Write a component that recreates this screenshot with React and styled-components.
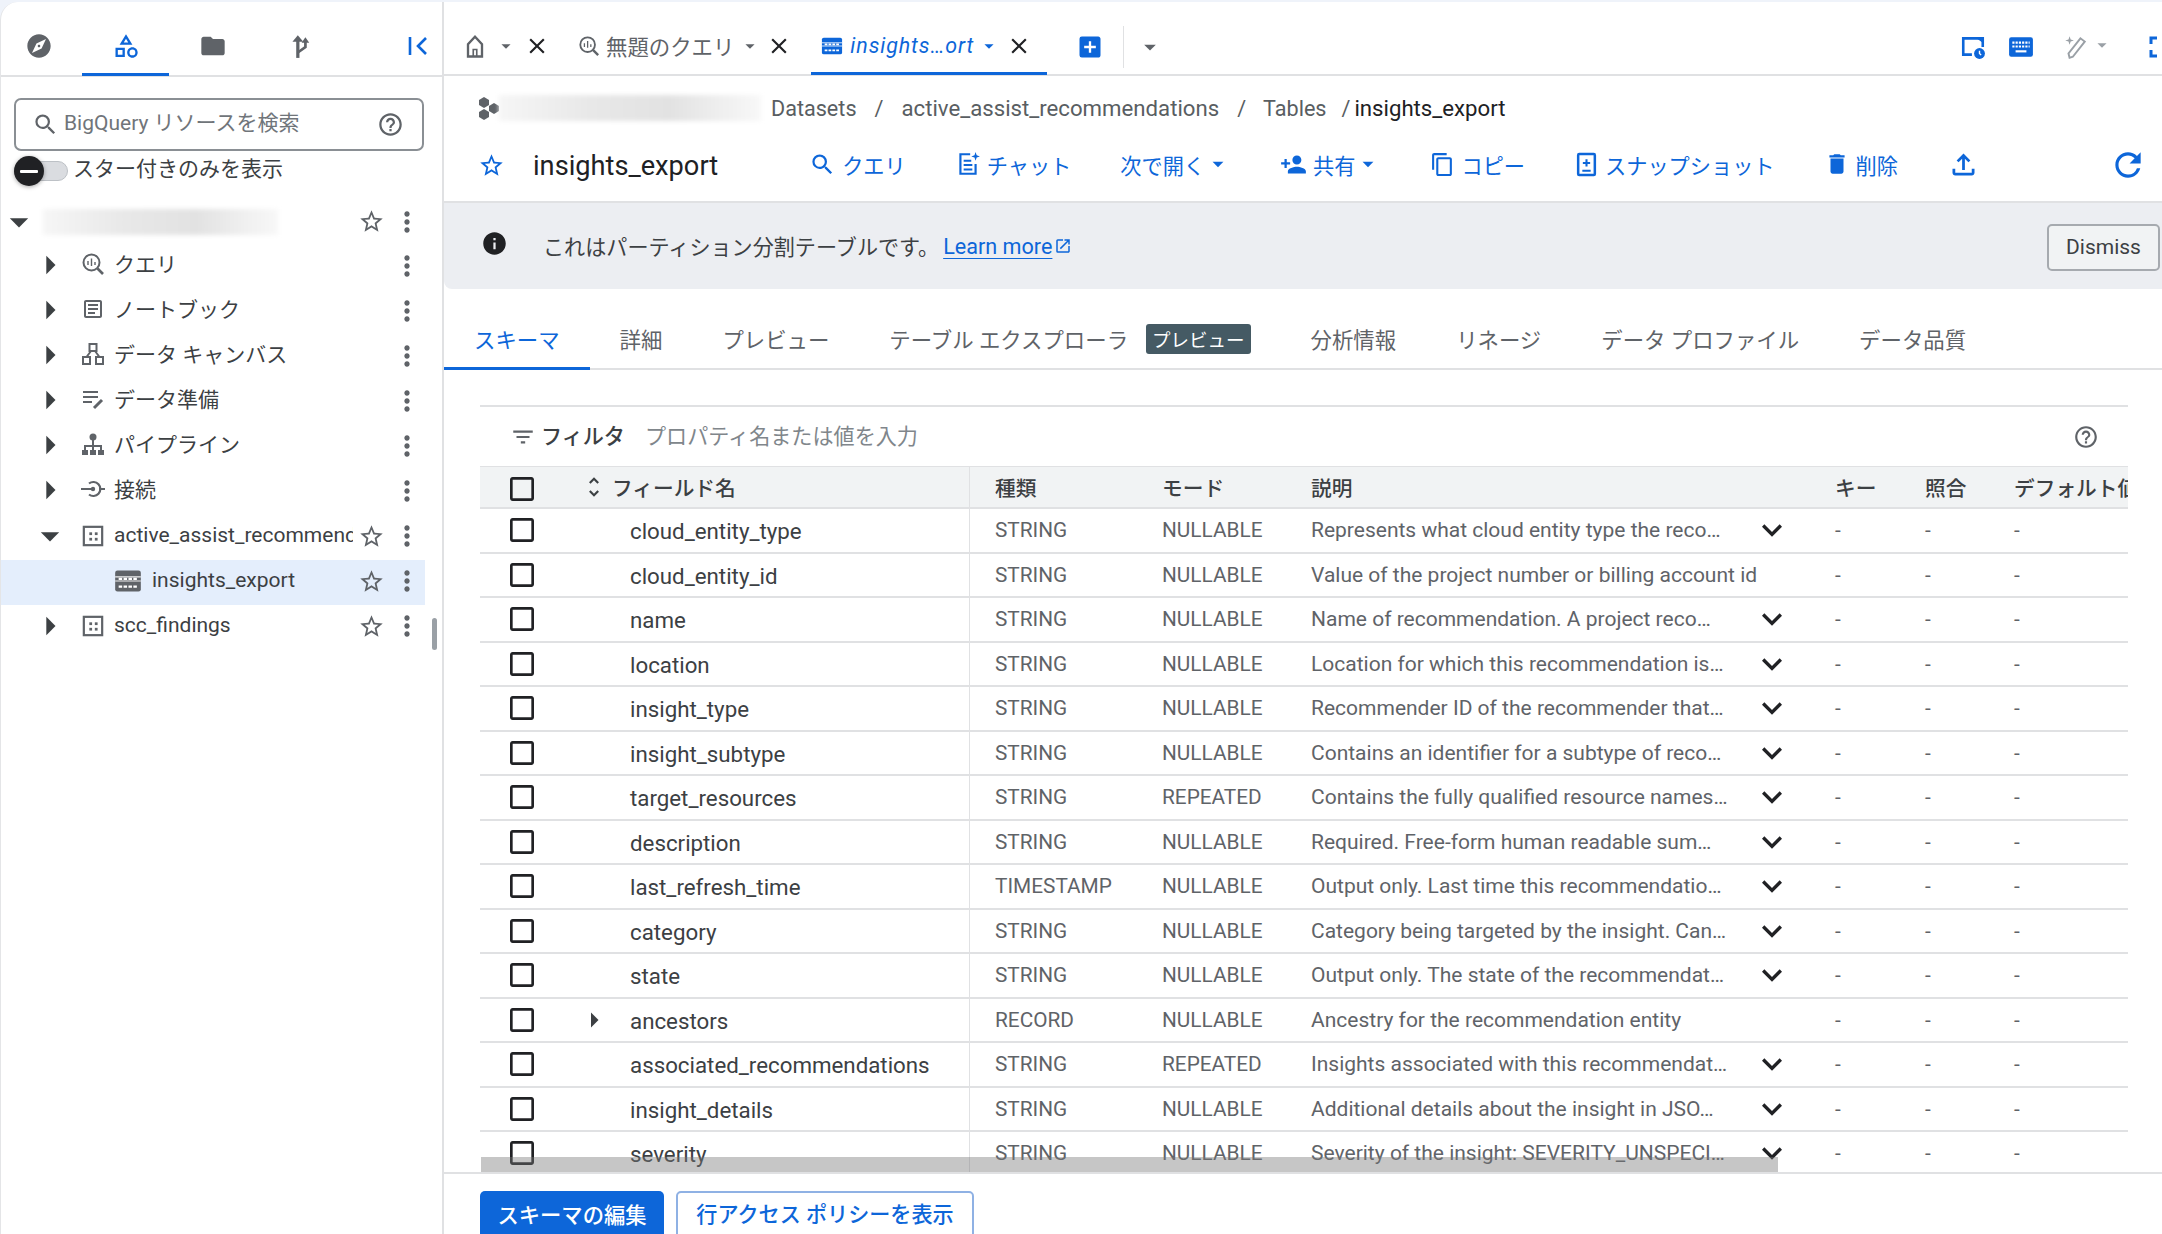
import React from "react";
import styled, { createGlobalStyle } from "styled-components";
import {
  MdExplore,
  MdOutlineCategory,
  MdFolder,
  MdSearch,
  MdHelpOutline,
  MdStarBorder,
  MdMoreVert,
  MdArrowDropDown,
  MdArrowRight,
  MdOutlineArticle,
  MdClose,
  MdAddBox,
  MdFullscreen,
  MdPersonAdd,
  MdContentCopy,
  MdDelete,
  MdOutlineFileUpload,
  MdRefresh,
  MdInfo,
  MdOpenInNew,
  MdFilterList,
  MdUnfoldMore,
  MdExpandMore,
  MdCheckBoxOutlineBlank,
} from "react-icons/md";

const BLUE = "#0d66d9";
const GREY = "#5f6368";
const DARK = "#202124";
const LINE = "#e0e1e3";
const FONT = `Roboto, "Noto Sans CJK JP", sans-serif`;

const GlobalStyle = createGlobalStyle`
  html, body { margin: 0; padding: 0; height: 100%; overflow: hidden; }
  body { font-family: ${FONT}; color: ${DARK}; background: #eff3fa; }
  #root { height: 100%; }
`;

/* ---- drawn icons ---- */
const Svg = ({ size = 24, color = "currentColor", children }) => (
  <svg width={size} height={size} viewBox="0 0 24 24" fill="none" stroke={color} strokeWidth="2" style={{ flexShrink: 0 }}>
    {children}
  </svg>
);

const ForkIcon = (p) => (
  <Svg {...p}>
    <path d="M10 23V5" strokeWidth="3" />
    <path d="M5 8l5-6 5 6z" fill="currentColor" stroke="none" />
    <path d="M10 18l7-5V8" strokeWidth="2.5" />
    <path d="M13.5 9l3.5-5 3.5 5z" fill="currentColor" stroke="none" />
  </Svg>
);
const CollapseIcon = (p) => (
  <Svg {...p}>
    <path d="M4 3v18" strokeWidth="2.6" />
    <path d="M20 4l-8 8 8 8" strokeWidth="2.6" />
  </Svg>
);
const QueryIcon = (p) => (
  <Svg {...p}>
    <circle cx="10.5" cy="10.5" r="8" />
    <path d="M16.5 16.5L22 22" strokeWidth="2.6" />
    <path d="M7 9v4M10.5 6.5V14M14 10v3" strokeWidth="1.4" />
  </Svg>
);
const CanvasIcon = (p) => (
  <Svg {...p}>
    <rect x="8.5" y="2" width="7" height="7" />
    <rect x="2" y="15" width="7" height="7" />
    <rect x="15" y="15" width="7" height="7" />
    <path d="M10 9l-4.5 6M14 9l4.5 6" />
  </Svg>
);
const PrepIcon = (p) => (
  <Svg {...p}>
    <path d="M2 5h15M2 10h15M2 15h9" />
    <path d="M13 21l8-8" strokeWidth="3" />
  </Svg>
);
const PipelineIcon = (p) => (
  <Svg {...p}>
    <circle cx="12" cy="5" r="3.5" fill="currentColor" stroke="none" />
    <path d="M12 8v6M4 19v-5h16v5M12 14v5" />
    <rect x="1" y="18" width="6" height="5" fill="currentColor" stroke="none" />
    <rect x="9" y="18" width="6" height="5" fill="currentColor" stroke="none" />
    <rect x="17" y="18" width="6" height="5" fill="currentColor" stroke="none" />
  </Svg>
);
const ConnectIcon = (p) => (
  <Svg {...p}>
    <path d="M0 12h13M18 12h6" />
    <path d="M8 6.5a7 7 0 1 1 0 11" strokeWidth="2.2" />
    <circle cx="12" cy="12" r="2.2" fill="currentColor" stroke="none" />
  </Svg>
);
const DatasetIcon = (p) => (
  <Svg {...p}>
    <rect x="2" y="2" width="20" height="20" strokeWidth="2.4" />
    <rect x="8" y="8" width="3" height="3" fill="currentColor" stroke="none" />
    <rect x="14" y="8" width="3" height="3" fill="currentColor" stroke="none" />
    <rect x="8" y="14" width="3" height="3" fill="currentColor" stroke="none" />
    <rect x="14" y="14" width="3" height="3" fill="currentColor" stroke="none" />
  </Svg>
);
const TableIcon = (p) => (
  <Svg {...p}>
    <rect x="1" y="3" width="22" height="18" rx="2" fill="currentColor" stroke="none" />
    <path d="M1 8.5h22M1 12h22" stroke="#fff" strokeWidth="1" opacity=".9" />
    <path d="M4 10.2h16M4 16.8h16" stroke="#fff" strokeWidth="2" strokeDasharray="3 1.2" />
  </Svg>
);
const HomeIcon = (p) => (
  <Svg {...p}>
    <path d="M6 21V10.5L12 4l6 6.5V21z" />
    <path d="M10.5 21v-6h3v6" strokeWidth="1.4" />
  </Svg>
);
const ChatIcon = (p) => (
  <Svg {...p}>
    <path d="M14 3H5v18h14v-9" strokeWidth="2" />
    <path d="M8 9h7M8 13h8M8 17h8" strokeWidth="1.8" />
    <path d="M19 1l1 3 3 1-3 1-1 3-1-3-3-1 3-1z" fill="currentColor" stroke="none" />
  </Svg>
);
const SnapshotIcon = (p) => (
  <Svg {...p}>
    <rect x="4" y="2" width="16" height="20" rx="1" strokeWidth="2.4" />
    <path d="M12 7v7M8.5 10.5h7M8 18h8" strokeWidth="2" />
  </Svg>
);
const ScheduleFileIcon = (p) => (
  <Svg {...p}>
    <path d="M11 19H3V4h18v8" strokeWidth="2.4" />
    <path d="M14 3h7v5z" fill="currentColor" stroke="none" />
    <circle cx="18" cy="18" r="5" fill="currentColor" stroke="none" />
    <path d="M18 15.5V18l1.5 1.5" stroke="#fff" strokeWidth="1.3" />
  </Svg>
);
const KeyboardIcon = (p) => (
  <Svg {...p}>
    <rect x="1" y="3" width="22" height="18" rx="2" fill="currentColor" stroke="none" />
    <path d="M4 8h16M4 11.5h16" stroke="#fff" strokeWidth="2" strokeDasharray="2 1" />
    <path d="M7 16h10" stroke="#fff" strokeWidth="2" />
  </Svg>
);
const WandIcon = (p) => (
  <Svg {...p}>
    <path d="M7 22l-1-4L17 4l4 3L10 21z" strokeWidth="1.8" />
    <path d="M7 2l1 3 3 1-3 1-1 3-1-3-3-1 3-1z" fill="currentColor" stroke="none" />
  </Svg>
);
const ProjectIcon = (p) => (
  <Svg {...p}>
    <path d="M5 1l5 3v5l-5 3-5-3V4z" fill="currentColor" stroke="none" />
    <path d="M5 13l5 3v5l-5 3-5-3v-5z" fill="currentColor" stroke="none" />
    <path d="M15 7l5 3v5l-5 3-5-3v-5z" fill="currentColor" stroke="none" />
  </Svg>
);

/* ---- shell ---- */
const Page = styled.div`
  display: flex;
  height: 100vh;
  padding-top: 2px;
  box-sizing: border-box;
  overflow: hidden;
`;

const Sidebar = styled.aside`
  width: 444px;
  flex-shrink: 0;
  box-sizing: border-box;
  background: #fff;
  border-top-left-radius: 18px;
  border-left: 1px solid #e4e5e7;
  border-right: 2px solid ${LINE};
  position: relative;
`;

const SideNav = styled.nav`
  height: 73px;
  display: flex;
  align-items: stretch;
  border-bottom: 2px solid ${LINE};
  padding-left: 0;
`;

const SideNavItem = styled.div`
  width: 87px;
  display: flex;
  align-items: center;
  justify-content: center;
  box-sizing: border-box;
  padding-top: 16px;
  color: ${(p) => (p.$active ? BLUE : GREY)};
  border-bottom: 3px solid ${(p) => (p.$active ? BLUE : "transparent")};
  margin-bottom: -1px;
  margin-left: ${(p) => p.$ml || 0}px;
`;

const CollapseButton = styled.div`
  margin-left: auto;
  margin-right: 12px;
  padding-top: 14px;
  display: flex;
  align-items: center;
  color: ${BLUE};
`;

const SearchBox = styled.div`
  height: 53px;
  margin: 21px 18px 0 13px;
  box-sizing: border-box;
  border: 2px solid #8a8f94;
  border-radius: 7px;
  display: flex;
  align-items: center;
  padding: 0 18px 0 16px;
  color: ${GREY};
  font-size: 21px;
  gap: 5px;
`;

const SearchLabel = styled.span`
  flex: 1;
  color: #70757a;
  margin-bottom: 7px;
`;

const StarFilter = styled.div`
  height: 40px;
  display: flex;
  align-items: center;
  padding-left: 13px;
  gap: 5px;
  font-size: 21px;
  color: #3c4043;
`;

const StarLabel = styled.span`
  margin-bottom: 8px;
`;

const ToggleTrack = styled.div`
  width: 54px;
  height: 20px;
  box-sizing: border-box;
  border: 1px solid #bdc1c6;
  border-radius: 10px;
  background: #dadce0;
  position: relative;
`;

const ToggleKnob = styled.div`
  position: absolute;
  left: -1px;
  top: -6px;
  width: 30px;
  height: 30px;
  border-radius: 50%;
  background: #202124;
  box-shadow: 0 1px 4px rgba(0, 0, 0, 0.35);
  display: flex;
  align-items: center;
  justify-content: center;

  &::after {
    content: "";
    width: 18px;
    height: 3px;
    background: #fff;
    border-radius: 1px;
  }
`;

const Tree = styled.div`
  margin-top: 10px;
`;

const TreeRow = styled.div`
  height: ${(p) => (p.$first ? "44px" : "45px")};
  width: 424px;
  display: flex;
  align-items: center;
  box-sizing: border-box;
  padding-left: ${(p) => p.$indent}px;
  padding-bottom: 3px;
  background: ${(p) => (p.$selected ? "#e4eefc" : "transparent")};
  color: #3c4043;
`;

const Caret = styled.div`
  width: 24px;
  flex-shrink: 0;
  display: flex;
  justify-content: center;
  color: #3c4043;
  margin-bottom: ${(p) => (p.$up ? 3 : 0)}px;

  svg {
    flex-shrink: 0;
  }
`;

const TreeIcon = styled.div`
  width: 30px;
  flex-shrink: 0;
  display: flex;
  justify-content: center;
  color: ${GREY};
  margin-left: ${(p) => p.$ml || 0}px;
  margin-bottom: ${(p) => (p.$up ? 5 : 0)}px;
`;

const TreeLabel = styled.div`
  flex: 1;
  min-width: 0;
  overflow: hidden;
  white-space: nowrap;
  font-size: 21px;
  margin-left: ${(p) => p.$ml || 6}px;
  margin-bottom: ${(p) => (p.$up ? 6 : 2)}px;
`;

const RowAction = styled.div`
  width: 36px;
  flex-shrink: 0;
  display: flex;
  justify-content: center;
  color: ${GREY};
`;

const Redacted = styled.div`
  width: ${(p) => p.$w}px;
  height: ${(p) => p.$h}px;
  margin-left: ${(p) => p.$ml || 0}px;
  flex-shrink: 0;
  background: linear-gradient(90deg, #f6f6f6 0%, #e8e8e8 35%, #e2e2e2 65%, #efefef 85%, #f8f8f8 100%);
  filter: blur(2px);
`;

const SideScrollThumb = styled.div`
  position: absolute;
  left: 431px;
  top: 616px;
  width: 5px;
  height: 32px;
  border-radius: 3px;
  background: #9aa0a6;
`;

const Main = styled.main`
  flex: 1;
  min-width: 0;
  background: #fff;
  display: flex;
  flex-direction: column;
  overflow: hidden;
`;

/* ---- tabs on top ---- */
const TabBar = styled.div`
  height: 74px;
  flex-shrink: 0;
  box-sizing: border-box;
  padding-top: 17px;
  border-bottom: 2px solid ${LINE};
  display: flex;
  align-items: stretch;
  color: ${GREY};
`;

const OpenTab = styled.div`
  display: flex;
  align-items: center;
  box-sizing: border-box;
  margin-left: ${(p) => p.$ml}px;
  padding-left: ${(p) => p.$pl}px;
  padding-right: ${(p) => p.$pr}px;
  border-bottom: 3px solid ${(p) => (p.$active ? BLUE : "transparent")};
  color: ${(p) => (p.$active ? BLUE : GREY)};
  margin-bottom: -1px;
`;

const OpenTabLabel = styled.span`
  font-size: 21.4px;
  margin-left: ${(p) => p.$ml || 6}px;
  font-style: ${(p) => (p.$italic ? "italic" : "normal")};
  letter-spacing: ${(p) => (p.$italic ? "0.9px" : "0")};
  white-space: nowrap;
`;

const Nudge = styled.span`
  display: inline-flex;
  margin-left: ${(p) => p.$ml || 0}px;
  color: ${(p) => p.$color || "inherit"};
`;

const BarDivider = styled.div`
  width: 1px;
  height: 42px;
  align-self: center;
  background: ${LINE};
  margin-left: 19px;
`;

const TabTools = styled.div`
  margin-left: auto;
  margin-right: -16px;
  display: flex;
  align-items: center;
  color: ${BLUE};
`;

/* ---- page head ---- */
const Breadcrumb = styled.div`
  height: 64px;
  flex-shrink: 0;
  display: flex;
  align-items: center;
  padding-left: 35px;
  font-size: 21.6px;
  color: #595e62;
`;

const CrumbName = styled.span`
  font-size: ${(p) => p.$size || 22.2}px;
  color: ${(p) => p.$color || "inherit"};
`;

const Slash = styled.span`
  margin: 0 ${(p) => p.$r ?? 18}px 0 ${(p) => p.$l ?? 18}px;
`;

const TitleRow = styled.div`
  height: 63px;
  flex-shrink: 0;
  box-sizing: border-box;
  padding: 0 15px 11px 34px;
  display: flex;
  align-items: center;
  border-bottom: 2px solid ${LINE};
`;

const Title = styled.h1`
  margin: 2px 0 0 28px;
  font-size: 27.2px;
  font-weight: 400;
  color: ${DARK};
`;

const Actions = styled.div`
  margin: 0 0 2px 91px;
  display: flex;
  align-items: center;
  gap: 49px;
`;

const Action = styled.div`
  display: flex;
  align-items: center;
  gap: ${(p) => p.$gap ?? 6}px;
  color: ${BLUE};
  font-size: 21.2px;
  white-space: nowrap;
`;

const Banner = styled.div`
  height: 86px;
  flex-shrink: 0;
  background: #eceef2;
  border-bottom-left-radius: 8px;
  display: flex;
  align-items: center;
  padding: 0 2px 0 37px;
  font-size: 21.1px;
  color: #3c4043;
`;

const BannerInfo = styled.span`
  display: inline-flex;
  margin-bottom: 5px;
`;

const BannerText = styled.span`
  margin-left: 35px;
`;

const LearnMore = styled.a`
  margin-left: 4px;
  font-size: 21.6px;
  color: ${BLUE};
  text-decoration: underline;
  text-underline-offset: 4px;
  text-decoration-thickness: 1px;
`;

const DismissButton = styled.button`
  margin: 2px 0 0 auto;
  width: 113px;
  height: 47px;
  border: 2px solid #a6aaaf;
  border-radius: 5px;
  background: #f1f3f4;
  font: 400 21px ${FONT};
  color: #3c4043;
`;

/* ---- detail tabs ---- */
const DetailTabs = styled.div`
  height: 81px;
  flex-shrink: 0;
  box-sizing: border-box;
  border-bottom: 2px solid ${LINE};
  display: flex;
  align-items: stretch;
  font-size: 21.4px;
`;

const DetailTab = styled.div`
  box-sizing: border-box;
  display: flex;
  align-items: center;
  padding: 21px 30px 0 30px;
  gap: 18px;
  margin-bottom: -2px;
  white-space: nowrap;
  color: ${(p) => (p.$active ? BLUE : GREY)};
  border-bottom: 3px solid ${(p) => (p.$active ? BLUE : "transparent")};
`;

const Badge = styled.span`
  height: 30px;
  padding: 0 6px;
  display: inline-flex;
  align-items: center;
  background: #455a64;
  color: #fff;
  border-radius: 3px;
  font-size: 18.5px;
`;

/* ---- schema table ---- */
const Schema = styled.section`
  margin: 35px 34px 0 36px;
  border-top: 2px solid ${LINE};
  flex: 1;
  min-height: 0;
  display: flex;
  flex-direction: column;
  overflow: hidden;
  position: relative;
`;

const FilterRow = styled.div`
  height: 59px;
  flex-shrink: 0;
  display: flex;
  align-items: center;
  padding: 0 29px 0 30px;
  font-size: 21.1px;
`;

const FilterLabel = styled.span`
  margin: 0 0 4px 5px;
  font-weight: 500;
  color: #3c4043;
`;

const FilterHint = styled.span`
  margin: 0 0 4px 20px;
  color: #80868b;
  flex: 1;
`;

const COLUMNS = "490px 167px 149px 524px 90px 89px 1fr";

const Row = styled.div`
  display: grid;
  grid-template-columns: ${COLUMNS};
  height: ${(p) => (p.$head ? "43px" : "44.5px")};
  flex-shrink: 0;
  box-sizing: border-box;
  border-bottom: 2px solid ${LINE};
  background: ${(p) => (p.$head ? "#f1f3f4" : "#fff")};
  border-top: ${(p) => (p.$head ? `1px solid ${LINE}` : "0")};
`;

const Cell = styled.div`
  display: flex;
  align-items: center;
  padding-left: 25px;
  min-width: 0;
  white-space: nowrap;
  overflow: hidden;
  font-size: ${(p) => (p.$head ? "20.7px" : "20.8px")};
  color: ${(p) => (p.$head ? "#3c4043" : GREY)};
  font-weight: ${(p) => (p.$head ? 500 : 400)};
`;

const NameCell = styled.div`
  display: flex;
  align-items: center;
  padding-left: 26px;
  border-right: 1px solid ${LINE};
  color: #3c4043;
  white-space: nowrap;
`;

const HeadCheck = styled.span`
  display: inline-flex;
  margin-top: 3px;
`;

const Expander = styled.span`
  width: 36px;
  margin-left: 59px;
  display: inline-flex;
  justify-content: center;
  align-items: center;
  flex-shrink: 0;
  color: #3c4043;
  position: relative;
  left: -21px;
`;

const FieldName = styled.span`
  font-size: 22.3px;
  padding-top: 2px;
  margin-left: ${(p) => p.$ml || 0}px;
`;

const HeadName = styled.span`
  font-size: 20.7px;
  font-weight: 500;
  margin-left: ${(p) => p.$ml || 0}px;
`;

const Description = styled.span`
  width: ${(p) => (p.$full ? "auto" : "420px")};
  flex-shrink: 0;
  font-size: 21px;
`;

const ExpandIcon = styled.span`
  display: inline-flex;
  flex-shrink: 0;
  margin-left: 21px;
  color: ${DARK};
`;

const HScroll = styled.div`
  position: absolute;
  left: 1px;
  bottom: 0;
  width: 1297px;
  height: 15px;
  background: rgba(120, 120, 120, 0.42);
`;

const Footer = styled.footer`
  flex-shrink: 0;
  height: 62px;
  box-sizing: border-box;
  border-top: 2px solid ${LINE};
  padding: 17px 0 0 36px;
  display: flex;
  gap: 12px;
  overflow: hidden;
`;

const PrimaryButton = styled.button`
  width: 184px;
  height: 60px;
  padding: 0 0 16px;
  border: 0;
  border-radius: 5px;
  background: ${BLUE};
  color: #fff;
  font: 500 21.3px ${FONT};
`;

const OutlineButton = styled.button`
  width: 298px;
  height: 60px;
  padding: 0 0 16px;
  border: 2px solid #8fb1e4;
  border-radius: 5px;
  background: #fff;
  color: ${BLUE};
  font: 500 21.1px ${FONT};
`;

const FIELDS = [
  ["cloud_entity_type", "STRING", "NULLABLE", "Represents what cloud entity type the reco…", true],
  ["cloud_entity_id", "STRING", "NULLABLE", "Value of the project number or billing account id", false],
  ["name", "STRING", "NULLABLE", "Name of recommendation. A project reco…", true],
  ["location", "STRING", "NULLABLE", "Location for which this recommendation is…", true],
  ["insight_type", "STRING", "NULLABLE", "Recommender ID of the recommender that…", true],
  ["insight_subtype", "STRING", "NULLABLE", "Contains an identifier for a subtype of reco…", true],
  ["target_resources", "STRING", "REPEATED", "Contains the fully qualified resource names…", true],
  ["description", "STRING", "NULLABLE", "Required. Free-form human readable sum…", true],
  ["last_refresh_time", "TIMESTAMP", "NULLABLE", "Output only. Last time this recommendatio…", true],
  ["category", "STRING", "NULLABLE", "Category being targeted by the insight. Can…", true],
  ["state", "STRING", "NULLABLE", "Output only. The state of the recommendat…", true],
  ["ancestors", "RECORD", "NULLABLE", "Ancestry for the recommendation entity", false, true],
  ["associated_recommendations", "STRING", "REPEATED", "Insights associated with this recommendat…", true],
  ["insight_details", "STRING", "NULLABLE", "Additional details about the insight in JSO…", true],
  ["severity", "STRING", "NULLABLE", "Severity of the insight: SEVERITY_UNSPECI…", true],
];

const RESOURCES = [
  ["クエリ", QueryIcon],
  ["ノートブック", MdOutlineArticle],
  ["データ キャンバス", CanvasIcon],
  ["データ準備", PrepIcon],
  ["パイプライン", PipelineIcon],
  ["接続", ConnectIcon],
];

const Kebab = () => (
  <RowAction>
    <MdMoreVert size={32} />
  </RowAction>
);

const Star = () => (
  <RowAction>
    <MdStarBorder size={27} />
  </RowAction>
);

const App = () => {
  return (
    <>
      <GlobalStyle />
      <Page>
        <Sidebar>
          <SideNav>
            <SideNavItem $ml={-6}>
              <MdExplore size={28} />
            </SideNavItem>
            <SideNavItem $active>
              <MdOutlineCategory size={28} />
            </SideNavItem>
            <SideNavItem>
              <MdFolder size={28} />
            </SideNavItem>
            <SideNavItem>
              <ForkIcon size={26} />
            </SideNavItem>
            <CollapseButton>
              <CollapseIcon size={24} />
            </CollapseButton>
          </SideNav>

          <SearchBox>
            <MdSearch size={27} />
            <SearchLabel>BigQuery リソースを検索</SearchLabel>
            <MdHelpOutline size={27} />
          </SearchBox>

          <StarFilter>
            <ToggleTrack>
              <ToggleKnob />
            </ToggleTrack>
            <StarLabel>スター付きのみを表示</StarLabel>
          </StarFilter>

          <Tree>
            <TreeRow $first $indent={6}>
              <Caret>
                <MdArrowDropDown size={44} />
              </Caret>
              <Redacted $w={235} $h={26} $ml={12} />
              <TreeLabel />
              <Star />
              <Kebab />
            </TreeRow>
            {RESOURCES.map(([label, Icon]) => (
              <TreeRow key={label} $indent={37}>
                <Caret $up>
                  <MdArrowRight size={44} />
                </Caret>
                <TreeIcon $ml={16} $up>
                  <Icon size={24} />
                </TreeIcon>
                <TreeLabel $up>{label}</TreeLabel>
                <RowAction />
                <Kebab />
              </TreeRow>
            ))}
            <TreeRow $indent={37}>
              <Caret>
                <MdArrowDropDown size={44} />
              </Caret>
              <TreeIcon $ml={16}>
                <DatasetIcon size={22} />
              </TreeIcon>
              <TreeLabel>active_assist_recommendations</TreeLabel>
              <Star />
              <Kebab />
            </TreeRow>
            <TreeRow $selected $indent={112}>
              <TreeIcon>
                <TableIcon size={28} />
              </TreeIcon>
              <TreeLabel $ml={9}>insights_export</TreeLabel>
              <Star />
              <Kebab />
            </TreeRow>
            <TreeRow $indent={37}>
              <Caret>
                <MdArrowRight size={44} />
              </Caret>
              <TreeIcon $ml={16}>
                <DatasetIcon size={22} />
              </TreeIcon>
              <TreeLabel>scc_findings</TreeLabel>
              <Star />
              <Kebab />
            </TreeRow>
          </Tree>
          <SideScrollThumb />
        </Sidebar>

        <Main>
          <TabBar>
            <OpenTab $ml={17} $pl={0} $pr={3}>
              <HomeIcon size={28} />
              <Nudge $ml={6}>
                <MdArrowDropDown size={22} />
              </Nudge>
              <Nudge $ml={7} $color={DARK}>
                <MdClose size={26} />
              </Nudge>
            </OpenTab>
            <OpenTab $ml={21} $pl={4} $pr={0}>
              <QueryIcon size={22} />
              <OpenTabLabel>無題のクエリ</OpenTabLabel>
              <Nudge $ml={5}>
                <MdArrowDropDown size={22} />
              </Nudge>
              <Nudge $ml={5} $color={DARK}>
                <MdClose size={26} />
              </Nudge>
            </OpenTab>
            <OpenTab $active $ml={19} $pl={10} $pr={15}>
              <TableIcon size={22} />
              <OpenTabLabel $italic $ml={7}>
                insights…ort
              </OpenTabLabel>
              <Nudge $ml={4}>
                <MdArrowDropDown size={22} />
              </Nudge>
              <Nudge $ml={6} $color={DARK}>
                <MdClose size={26} />
              </Nudge>
            </OpenTab>
            <Nudge $ml={29} $color={BLUE} style={{ alignSelf: "center" }}>
              <MdAddBox size={28} />
            </Nudge>
            <BarDivider />
            <Nudge $ml={12} style={{ alignSelf: "center" }}>
              <MdArrowDropDown size={28} />
            </Nudge>
            <TabTools>
              <ScheduleFileIcon size={26} />
              <Nudge $ml={22}>
                <KeyboardIcon size={26} />
              </Nudge>
              <Nudge $ml={28} $color="#9aa0a6">
                <WandIcon size={26} />
                <Nudge $ml={3}>
                  <MdArrowDropDown size={22} />
                </Nudge>
              </Nudge>
              <Nudge $ml={29}>
                <MdFullscreen size={36} />
              </Nudge>
            </TabTools>
          </TabBar>

          <Breadcrumb>
            <Nudge $color={GREY}>
              <ProjectIcon size={24} />
            </Nudge>
            <Redacted $w={262} $h={26} $ml={-4} />
            <Nudge $ml={10}>Datasets</Nudge>
            <Slash $r={18}>/</Slash>
            <CrumbName>active_assist_recommendations</CrumbName>
            <Slash $r={17}>/</Slash>
            Tables
            <Slash $l={15} $r={4}>/</Slash>
            <CrumbName $color={DARK}>insights_export</CrumbName>
          </Breadcrumb>

          <TitleRow>
            <Nudge $color={BLUE}>
              <MdStarBorder size={27} />
            </Nudge>
            <Title>insights_export</Title>
            <Actions>
              <Action>
                <MdSearch size={27} />
                クエリ
              </Action>
              <Action>
                <ChatIcon size={26} />
                チャット
              </Action>
              <Action $gap={0}>
                次で開く
                <MdArrowDropDown size={26} />
              </Action>
              <Action>
                <MdPersonAdd size={27} />
                <span>共有</span>
                <Nudge style={{ marginLeft: -6 }}>
                  <MdArrowDropDown size={26} />
                </Nudge>
              </Action>
              <Action>
                <MdContentCopy size={25} />
                コピー
              </Action>
              <Action>
                <SnapshotIcon size={25} />
                スナップショット
              </Action>
              <Action>
                <MdDelete size={26} />
                削除
              </Action>
              <Action>
                <MdOutlineFileUpload size={33} />
              </Action>
            </Actions>
            <Nudge style={{ marginLeft: "auto" }} $color={BLUE}>
              <MdRefresh size={38} />
            </Nudge>
          </TitleRow>

          <Banner>
            <BannerInfo>
              <MdInfo size={27} color={DARK} />
            </BannerInfo>
            <BannerText>これはパーティション分割テーブルです。</BannerText>
            <LearnMore>Learn more</LearnMore>
            <Nudge $ml={2} $color={BLUE}>
              <MdOpenInNew size={18} />
            </Nudge>
            <DismissButton>Dismiss</DismissButton>
          </Banner>

          <DetailTabs>
            <DetailTab $active>スキーマ</DetailTab>
            <DetailTab>詳細</DetailTab>
            <DetailTab>プレビュー</DetailTab>
            <DetailTab>
              テーブル エクスプローラ
              <Badge>プレビュー</Badge>
            </DetailTab>
            <DetailTab>分析情報</DetailTab>
            <DetailTab>リネージ</DetailTab>
            <DetailTab>データ プロファイル</DetailTab>
            <DetailTab>データ品質</DetailTab>
          </DetailTabs>

          <Schema>
            <FilterRow>
              <MdFilterList size={26} color={GREY} />
              <FilterLabel>フィルタ</FilterLabel>
              <FilterHint>プロパティ名または値を入力</FilterHint>
              <MdHelpOutline size={26} color={GREY} />
            </FilterRow>
            <Row $head>
              <NameCell>
                <HeadCheck>
                  <MdCheckBoxOutlineBlank size={32} color={DARK} />
                </HeadCheck>
                <Expander>
                  <MdUnfoldMore size={26} />
                </Expander>
                <HeadName $ml={-21}>フィールド名</HeadName>
              </NameCell>
              <Cell $head>種類</Cell>
              <Cell $head>モード</Cell>
              <Cell $head>説明</Cell>
              <Cell $head>キー</Cell>
              <Cell $head>照合</Cell>
              <Cell $head>デフォルト値</Cell>
            </Row>
            {FIELDS.map(([name, type, mode, desc, more, record]) => (
              <Row key={name}>
                <NameCell>
                  <MdCheckBoxOutlineBlank size={32} color={DARK} />
                  {record ? (
                    <>
                      <Expander>
                        <MdArrowRight size={36} />
                      </Expander>
                      <FieldName $ml={-3}>{name}</FieldName>
                    </>
                  ) : (
                    <FieldName $ml={92}>{name}</FieldName>
                  )}
                </NameCell>
                <Cell>{type}</Cell>
                <Cell>{mode}</Cell>
                <Cell>
                  <Description $full={!more}>{desc}</Description>
                  {more && (
                    <ExpandIcon>
                      <MdExpandMore size={40} />
                    </ExpandIcon>
                  )}
                </Cell>
                <Cell>-</Cell>
                <Cell>-</Cell>
                <Cell>-</Cell>
              </Row>
            ))}
            <HScroll />
          </Schema>

          <Footer>
            <PrimaryButton>スキーマの編集</PrimaryButton>
            <OutlineButton>行アクセス ポリシーを表示</OutlineButton>
          </Footer>
        </Main>
      </Page>
    </>
  );
};

export default App;
